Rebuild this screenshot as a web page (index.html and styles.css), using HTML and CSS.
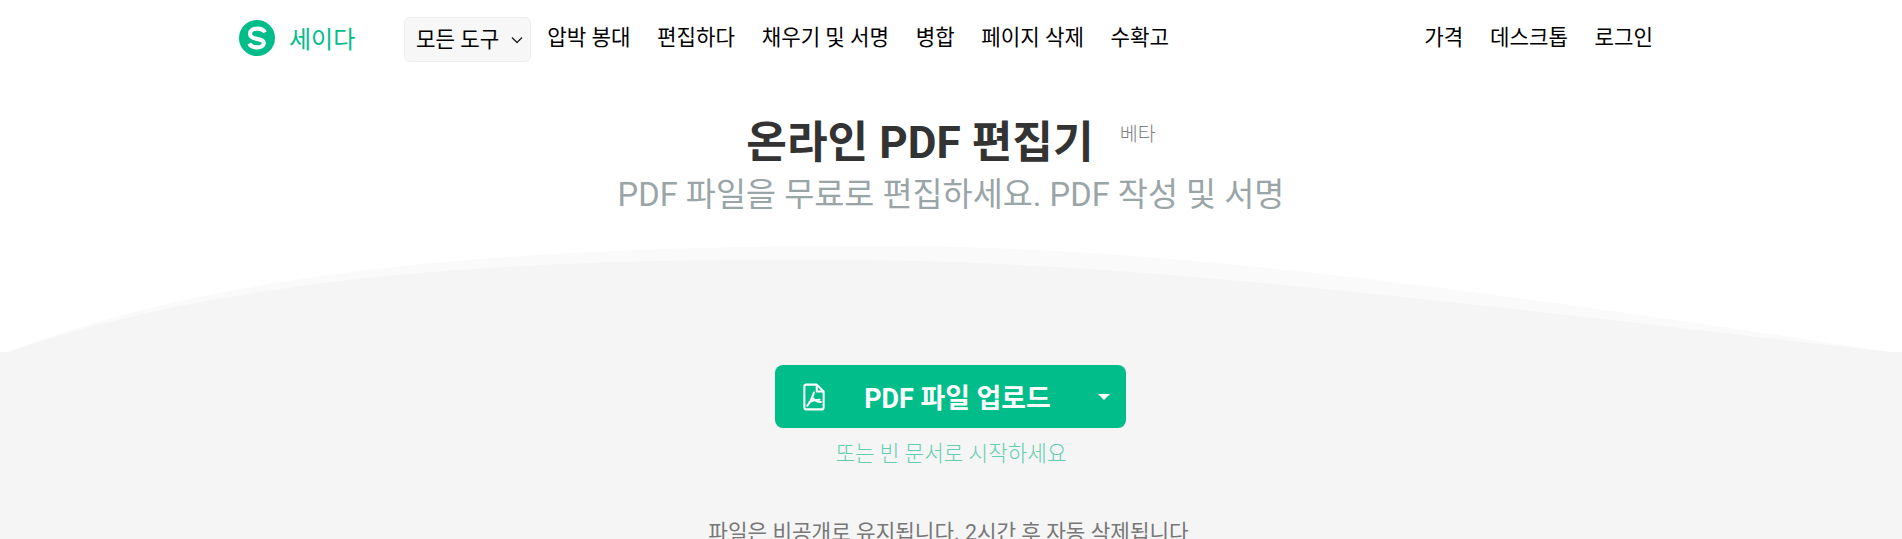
FILE: index.html
```
<!DOCTYPE html>
<html lang="ko">
<head>
<meta charset="utf-8">
<title>온라인 PDF 편집기</title>
<link rel="stylesheet" href="styles.css">
</head>
<body>
<svg class="wave" viewBox="0 0 1902 539" width="1902" height="539" aria-hidden="true">
  <path class="wave-back" d="M0 352H8C240 262 560 246 880 246C1170 246 1480 290 1890 352H1902V539H0Z"/>
  <path class="wave-front" d="M0 352H8C250 268 560 258 860 260C1150 262 1500 308 1890 352H1902V539H0Z"/>
</svg>
<header class="topbar">
  <a class="brand" href="#">
    <svg class="brand-mark" viewBox="0 0 36 36" width="36" height="36"><circle cx="18" cy="18" r="18" fill="#00bd8a"/><path d="M26 12.400C24.600 9.700 21.600 8.600 18.400 8.600C14.200 8.600 11 10.700 11 14C11 17.100 13.800 18.200 18 18.900C22 19.600 24.800 20.400 24.800 23C24.800 25.800 21.800 27.400 18.200 27.400C14.800 27.400 11.700 26.100 10.200 23.400" fill="none" stroke="#fff" stroke-width="4.200"/></svg>
    <span class="brand-name">세이다</span>
  </a>
  <nav class="menu">
    <button class="menu-all">모든 도구<svg class="chev" viewBox="0 0 12 8" width="12" height="8"><path d="M1 1.500L6 6.500L11 1.500" fill="none" stroke="#222" stroke-width="1.400"/></svg></button>
    <a href="#">압박 봉대</a>
    <a href="#">편집하다</a>
    <a href="#">채우기 및 서명</a>
    <a href="#">병합</a>
    <a href="#">페이지 삭제</a>
    <a href="#">수확고</a>
  </nav>
  <nav class="menu menu-right">
    <a href="#">가격</a>
    <a href="#">데스크톱</a>
    <a href="#">로그인</a>
  </nav>
</header>
<main class="hero">
  <div class="title-row">
    <h1 class="title">온라인 PDF 편집기</h1>
    <span class="beta">베타</span>
  </div>
  <p class="subtitle">PDF 파일을 무료로 편집하세요. PDF 작성 및 서명</p>
  <button class="upload">
    <svg class="pdf-icon" viewBox="0 0 24 30" width="22" height="28"><path d="M3.500 1.500H15L22.500 9V26.500Q22.500 28.500 20.500 28.500H3.500Q1.500 28.500 1.500 26.500V3.500Q1.500 1.500 3.500 1.500ZM15 1.500V9H22.500" fill="none" stroke="#fff" stroke-width="2.200" stroke-linejoin="round"/><path d="M12 10C10.500 14 9 20 4.500 24.500M11 16.500C13 19 16 20.500 19.500 20.500M7 20.500C10 19 14.500 18 18 18" fill="none" stroke="#fff" stroke-width="2.200" stroke-linecap="round"/></svg>
    <span class="upload-label">PDF 파일 업로드</span>
    <span class="caret"></span>
  </button>
  <a class="blank" href="#">또는 빈 문서로 시작하세요</a>
  <p class="privacy">파일은 비공개로 유지됩니다. 2시간 후 자동 삭제됩니다</p>
</main>
</body>
</html>
```
FILE: styles.css
```
html, body {
  margin: 0;
  height: 539px;
  overflow: hidden;
  background: #fff;
}
body {
  position: relative;
  font-family: Roboto, "Noto Sans CJK KR", sans-serif;
  color: #000;
}
a { color: inherit; text-decoration: none; }
.wave { position: absolute; top: 0; left: 0; }
.wave-back { fill: #fafafa; }
.wave-front { fill: #f5f5f5; }
.topbar {
  position: relative;
  display: flex;
  align-items: center;
  height: 75px;
  padding: 0 249px 0 239px;
}
.brand { display: flex; align-items: center; gap: 14px; width: 165px; }
.brand-name { font-size: 24px; color: #00bd8a; }
.menu {
  display: flex;
  align-items: center;
  gap: 26.600px;
  font-size: 21.200px;
  line-height: 28px;
}
.menu-right { margin-left: auto; }
.menu-all {
  display: flex;
  align-items: center;
  gap: 12px;
  height: 45px;
  margin: 4px -10.600px 0 0;
  padding: 0 7px 0 11px;
  font: inherit;
  background: #f7f7f7;
  border: 1px solid #eee;
  border-radius: 6px;
}
.hero {
  position: relative;
  display: flex;
  flex-direction: column;
  align-items: center;
}
.title-row { display: flex; align-items: flex-start; margin-top: 36px; }
.title {
  margin: 0;
  font-size: 44.200px;
  line-height: 64px;
  font-weight: 700;
  color: #333;
}
.beta { margin: 10px 0 0 26px; font-size: 19.600px; font-weight: 300; line-height: 28px; color: #808080; }
.subtitle { margin: -2px 0 0; font-size: 32.700px; line-height: 44px; color: #9aa5a8; }
.upload {
  display: flex;
  align-items: center;
  width: 351px;
  height: 63px;
  margin: 148px 1px 0 0;
  padding: 0 16px 0 28px;
  color: #fff;
  background: #00bd8a;
  border: 0;
  border-radius: 8px;
  font: inherit;
}
.upload-label { flex: 1; padding-right: 8px; font-size: 26.900px; font-weight: 700; text-align: center; }
.caret {
  width: 0;
  height: 0;
  border: 6px solid transparent;
  border-top-color: #fff;
  border-bottom: 0;
}
.blank { margin-top: 10px; font-size: 21.300px; font-weight: 300; line-height: 32px; color: #62ceb0; }
.privacy { margin: 49px 5px 0 0; font-size: 21.300px; line-height: 28px; color: #777; }
```
